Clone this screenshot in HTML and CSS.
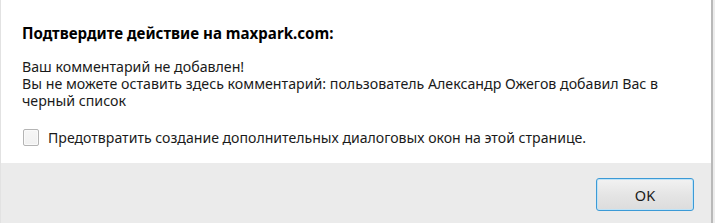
FILE: index.html
```html
<!DOCTYPE html>
<html lang="ru">
<head>
<meta charset="utf-8">
<title>Подтвердите действие</title>
<link rel="stylesheet" href="styles.css">
</head>
<body>
<div class="frame">
  <div class="dialog">
    <div class="content">
      <div class="title">Подтвердите действие на maxpark.com:</div>
      <div class="message">Ваш комментарий не добавлен!<br>Вы не можете оставить здесь комментарий: пользователь Александр Ожегов добавил Вас в черный список</div>
      <label class="check">
        <span class="box"></span>
        <span class="label">Предотвратить создание дополнительных диалоговых окон на этой странице.</span>
      </label>
    </div>
    <div class="footer">
      <button class="ok">OK</button>
    </div>
  </div>
  <div class="strip"></div>
</div>
</body>
</html>
```
FILE: styles.css
```css
html, body {
  margin: 0;
  padding: 0;
  height: 100%;
}
body {
  background: #f0f0f0;
  font-family: "Noto Sans", "Open Sans", "DejaVu Sans", sans-serif;
  color: #1a1a1a;
}
.frame {
  display: flex;
  height: 223px;
}
.dialog {
  width: 710px;
  display: flex;
  flex-direction: column;
  border-left: 1px solid #e2e2e2;
  border-right: 2px solid #b9b9b9;
}
.strip {
  flex: 1;
  background: #ececec;
}
.content {
  background: #ffffff;
  height: 163px;
  box-sizing: border-box;
  padding: 23px 21px 0;
}
.title {
  font-size: 15.1px;
  font-weight: 700;
  line-height: 20px;
  color: #000;
}
.message {
  margin-top: 15px;
  font-size: 14.2px;
  line-height: 17px;
  width: 670px;
}
.check {
  display: flex;
  align-items: center;
  height: 18px;
  margin-top: 19px;
  font-size: 14.1px;
}
.box {
  width: 14px;
  height: 15px;
  margin-left: 1px;
  border: 1px solid #b4b4b4;
  border-radius: 2px;
  background: linear-gradient(#f6f6f6, #f1f1f1);
  box-shadow: inset 0 0 0 1px #fafafa;
}
.label {
  margin-left: 9px;
}
.footer {
  flex: 1;
  background: #ebebeb;
  display: flex;
  justify-content: flex-end;
  align-items: flex-start;
  padding: 15px 17px 0 0;
}
.ok {
  width: 98px;
  height: 33px;
  border: 1px solid #3c9ad6;
  border-radius: 3px;
  background: linear-gradient(#f2f2f2, #e5e5e5 50%, #dcdcdc);
  box-shadow: inset 0 0 0 1px #bfe3f7;
  font-family: "Noto Sans", "Open Sans", sans-serif;
  font-size: 14.5px;
  color: #1a1a1a;
  padding: 0;
}
```
